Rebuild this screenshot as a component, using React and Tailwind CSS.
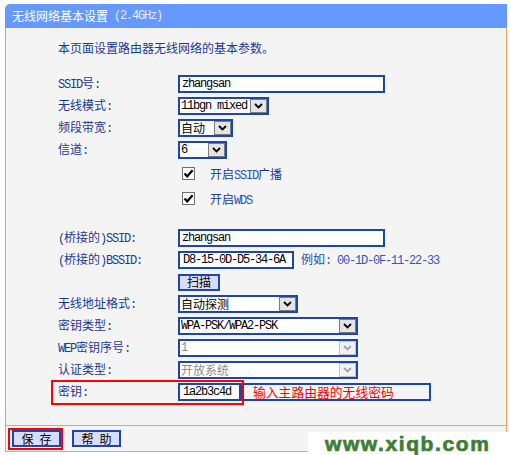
import React from "react";

const MONO = "font-['Liberation_Mono',monospace] text-[12px] tracking-[-1.2px]";

function Txt({ s, monoClass = "" }) {
  const parts = s.split(/([\x00-\x7F]+)/).filter((p) => p.length);
  return (
    <>
      {parts.map((p, i) =>
        /^[\x00-\x7F]+$/.test(p) ? (
          <span key={i} className={`${MONO} whitespace-pre ${monoClass}`}>
            {p}
          </span>
        ) : (
          <span key={i}>{p}</span>
        )
      )}
    </>
  );
}

function Chevron({ disabled }) {
  return (
    <svg width="9" height="6" viewBox="0 0 9 6">
      <polyline
        points="1,1 4.5,4.5 8,1"
        fill="none"
        stroke={disabled ? "#9aa3b0" : "#000"}
        strokeWidth="1.8"
      />
    </svg>
  );
}

function Select({ className = "", children, disabled }) {
  return (
    <div className={`flex h-[18px] border-2 border-[#1e44ae] bg-white ${className}`}>
      <div
        className={`flex flex-1 items-center whitespace-nowrap pl-[1px] leading-none ${
          disabled ? "text-[#8c8c8c]" : "text-black"
        }`}
      >
        {children}
      </div>
      <div
        className={`flex w-[17px] shrink-0 items-center justify-center border ${
          disabled ? "border-[#c4c4c4] bg-[#f2f2f2]" : "border-[#7c7c7c] bg-[#e4e4e4]"
        }`}
      >
        <Chevron disabled={disabled} />
      </div>
    </div>
  );
}

function Input({ className = "", children }) {
  return (
    <div
      className={`flex h-[18px] items-center border-2 border-[#1e44ae] bg-white pl-[2px] leading-none text-black ${className}`}
    >
      {children}
    </div>
  );
}

function Row({ label, children, className = "" }) {
  return (
    <div className={`flex h-[22px] items-center ${className}`}>
      <div className="w-[120px] shrink-0 leading-none text-[#1a3a99]">
        <Txt s={label} />
      </div>
      {children}
    </div>
  );
}

function Check() {
  return (
    <div className="flex h-[13px] w-[13px] items-center justify-center border border-[#707070] bg-white">
      <svg width="11" height="11" viewBox="0 0 11 11">
        <path d="M1.5 5.5 L4.2 8.3 L9.6 2.2" fill="none" stroke="#000" strokeWidth="2.2" />
      </svg>
    </div>
  );
}

function Btn({ children, className = "" }) {
  return (
    <div
      className={`flex h-[17px] items-center justify-center gap-[6px] border-2 border-[#1e44ae] bg-[#dadcfb] leading-none text-black ${className}`}
    >
      {children}
    </div>
  );
}

export default function App() {
  return (
    <div className="relative h-[455px] w-[510px] overflow-hidden bg-white pt-[4px] pl-[5px] font-['Noto_Sans_CJK_SC',sans-serif] text-[12px]">
      <div className="w-[502px]">
        {/* header */}
        <div className="flex h-[24px] items-center rounded-tl-[5px] bg-[#6699ff] pl-[7px] pb-[1px] text-white">
          <span className="leading-none">无线网络基本设置</span>
          <span className={`${MONO} whitespace-pre leading-none text-[#e4eaff]`}> (2.4GHz)</span>
        </div>

        {/* body */}
        <div className="border-x border-b border-[#f5a04c] bg-[#f4f4f4] pl-[52px] pt-[12px] pb-[22px]">
          <div className="mb-[17px] flex h-[16px] items-center leading-none text-[#1a3a99]">
            本页面设置路由器无线网络的基本参数。
          </div>

          <Row label="SSID号:">
            <Input className="w-[207px]">
              <span className={MONO}>zhangsan</span>
            </Input>
          </Row>
          <Row label="无线模式:">
            <Select className="w-[91px]">
              <span className={`${MONO} whitespace-pre`}>11bgn mixed</span>
            </Select>
          </Row>
          <Row label="频段带宽:">
            <Select className="w-[55px]">自动</Select>
          </Row>
          <Row label="信道:">
            <Select className="w-[49px]">
              <span className={MONO}>6</span>
            </Select>
          </Row>

          <div className="flex h-[25px] items-center pl-[124px]">
            <Check />
            <div className="ml-[15px] pt-[3px] leading-none text-[#1a3a99]">
              <Txt s="开启SSID广播" monoClass="text-[#2c52bd]" />
            </div>
          </div>
          <div className="flex h-[25px] items-center pl-[124px]">
            <Check />
            <div className="ml-[15px] pt-[3px] leading-none text-[#1a3a99]">
              <Txt s="开启WDS" monoClass="text-[#2c52bd]" />
            </div>
          </div>

          <div className="h-[16px]" />

          <Row label="(桥接的)SSID:">
            <Input className="w-[207px]">
              <span className={MONO}>zhangsan</span>
            </Input>
          </Row>
          <Row label="(桥接的)BSSID:">
            <Input className="w-[116px]">
              <span className={`${MONO} pl-[1px]`}>D8-15-0D-D5-34-6A</span>
            </Input>
            <div className="ml-[7px] leading-none text-[#2448b0]">
              <Txt s="例如: 00-1D-0F-11-22-33" monoClass="text-[#3158c4]" />
            </div>
          </Row>
          <Row label="">
            <Btn className="w-[42px]">扫描</Btn>
          </Row>
          <Row label="无线地址格式:">
            <Select className="w-[120px]">自动探测</Select>
          </Row>
          <Row label="密钥类型:">
            <Select className="w-[180px]">
              <span className={MONO}>WPA-PSK/WPA2-PSK</span>
            </Select>
          </Row>
          <Row label="WEP密钥序号:">
            <Select className="w-[180px]" disabled>
              <span className={MONO}>1</span>
            </Select>
          </Row>
          <Row label="认证类型:">
            <Select className="w-[180px]" disabled>
              开放系统
            </Select>
          </Row>
          <Row label="密钥:" className="relative">
            <div className="absolute left-[-7px] top-[-1px] h-[25px] w-[193px] border-2 border-[#ff0000]" />
            <Input className="w-[63px]">
              <span className={`${MONO} pl-[1px]`}>1a2b3c4d</span>
            </Input>
            <div className="flex h-[18px] w-[190px] items-center border-2 border-[#1e44ae] pl-[10px] text-[12.8px] leading-none text-[#ff0000]">
              输入主路由器的无线密码
            </div>
          </Row>
        </div>

        {/* footer */}
        <div className="flex h-[26px] gap-[11px] border-x border-b border-[#f5a04c] bg-[#f4f4f4] pl-[6px] pt-[4px]">
          <div className="relative">
            <div className="absolute -left-[4px] -top-[2px] h-[22px] w-[55px] border-2 border-[#ff0000]" />
            <Btn className="w-[49px]">
              <span>保</span>
              <span>存</span>
            </Btn>
          </div>
          <Btn className="w-[49px]">
            <span>帮</span>
            <span>助</span>
          </Btn>
        </div>
      </div>

      {/* watermark */}
      <div className="absolute left-[308px] top-[432px] flex h-[23px] w-[202px] items-center bg-white pl-[17px]">
        <span className="font-['Liberation_Sans',Arial,sans-serif] text-[21px] font-bold leading-none tracking-[1.6px] text-[#3f7d34] [-webkit-text-stroke:0.7px_#3f7d34]">
          www.xiqb.com
        </span>
      </div>
    </div>
  );
}
